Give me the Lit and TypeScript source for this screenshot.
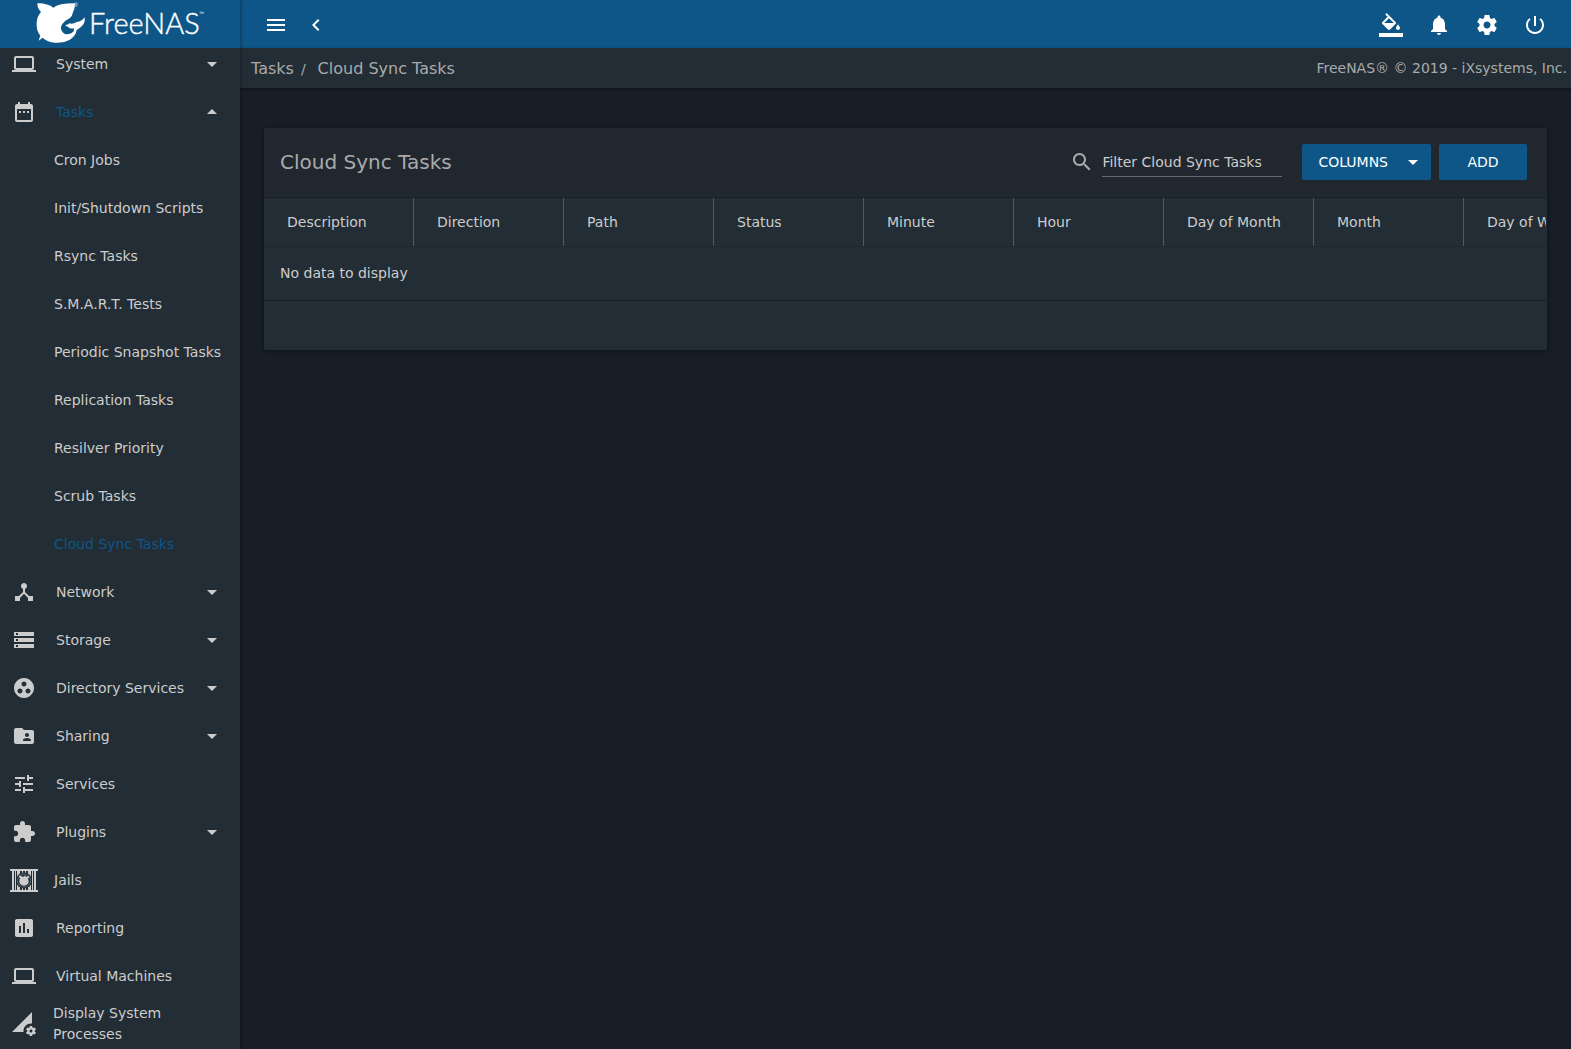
import { LitElement, html, css, svg, nothing } from "lit";
import { customElement, property } from "lit/decorators.js";

const ICONS: Record<string, string> = {
  laptop: "M20 18c1.1 0 1.99-.9 1.99-2L22 6c0-1.1-.9-2-2-2H4c-1.1 0-2 .9-2 2v10c0 1.1.9 2 2 2H0v2h24v-2h-4zM4 6h16v10H4V6z",
  calendar: "M9 11H7v2h2v-2zm4 0h-2v2h2v-2zm4 0h-2v2h2v-2zm2-7h-1V2h-2v2H8V2H6v2H5c-1.11 0-1.99.9-1.99 2L3 20c0 1.1.89 2 2 2h14c1.1 0 2-.9 2-2V6c0-1.1-.9-2-2-2zm0 16H5V9h14v11z",
  hub: "M17 16l-4-4V8.82C14.16 8.4 15 7.3 15 6c0-1.66-1.34-3-3-3S9 4.34 9 6c0 1.3.84 2.4 2 2.82V12l-4 4H3v5h5v-3.05l4-4.2 4 4.2V21h5v-5h-4z",
  storage: "M2 20h20v-4H2v4zm2-3h2v2H4v-2zM2 4v4h20V4H2zm4 3H4V5h2v2zm-4 7h20v-4H2v4zm2-3h2v2H4v-2z",
  group: "M12 2C6.48 2 2 6.48 2 12s4.48 10 10 10 10-4.48 10-10S17.52 2 12 2zM8 17.5c-1.38 0-2.5-1.12-2.5-2.5s1.12-2.5 2.5-2.5 2.5 1.12 2.5 2.5-1.12 2.5-2.5 2.5zM9.5 8c0-1.38 1.12-2.5 2.5-2.5s2.5 1.12 2.5 2.5-1.12 2.5-2.5 2.5S9.5 9.38 9.5 8zm6.5 9.5c-1.38 0-2.5-1.12-2.5-2.5s1.12-2.5 2.5-2.5 2.5 1.12 2.5 2.5-1.12 2.5-2.5 2.5z",
  shared: "M20 6h-8l-2-2H4c-1.1 0-1.99.9-1.99 2L2 18c0 1.1.9 2 2 2h16c1.1 0 2-.9 2-2V8c0-1.1-.9-2-2-2zm-5 3c1.1 0 2 .9 2 2s-.9 2-2 2-2-.9-2-2 .9-2 2-2zm4 8h-8v-1c0-1.33 2.67-2 4-2s4 .67 4 2v1z",
  tune: "M3 17v2h6v-2H3zM3 5v2h10V5H3zm10 16v-2h8v-2h-8v-2h-2v6h2zM7 9v2H3v2h4v2h2V9H7zm14 4v-2H11v2h10zm-6-4h2V7h4V5h-4V3h-2v6z",
  extension: "M20.5 11H19V7c0-1.1-.9-2-2-2h-4V3.5C13 2.12 11.88 1 10.5 1S8 2.12 8 3.5V5H4c-1.1 0-1.99.9-1.99 2v3.8H3.5c1.49 0 2.7 1.21 2.7 2.7s-1.21 2.7-2.7 2.7H2V20c0 1.1.9 2 2 2h3.8v-1.5c0-1.49 1.21-2.7 2.7-2.7 1.49 0 2.7 1.21 2.7 2.7V22H17c1.1 0 2-.9 2-2v-4h1.5c1.38 0 2.5-1.12 2.5-2.5S21.88 11 20.5 11z",
  chart: "M19 3H5c-1.1 0-2 .9-2 2v14c0 1.1.9 2 2 2h14c1.1 0 2-.9 2-2V5c0-1.1-.9-2-2-2zM9 17H7v-7h2v7zm4 0h-2V7h2v10zm4 0h-2v-4h2v4z",
  processes: "M18.99 11.5c.34 0 .67.03 1 .07L20 0 0 20h11.56c-.04-.33-.07-.66-.07-1 0-4.14 3.36-7.5 7.5-7.5zm3.71 7.99c.02-.16.04-.32.04-.49 0-.17-.01-.33-.04-.49l1.06-.83c.09-.08.12-.21.06-.32l-1-1.73c-.06-.11-.19-.15-.31-.11l-1.24.5c-.26-.2-.54-.37-.85-.49l-.19-1.32c-.01-.12-.12-.21-.24-.21h-2c-.12 0-.23.09-.25.21l-.19 1.32c-.3.13-.59.29-.85.49l-1.24-.5c-.11-.04-.24 0-.31.11l-1 1.73c-.06.11-.04.24.06.32l1.06.83c-.02.16-.03.32-.03.49 0 .17.01.33.03.49l-1.06.83c-.09.08-.12.21-.06.32l1 1.73c.06.11.19.15.31.11l1.24-.5c.26.2.54.37.85.49l.19 1.32c.02.12.12.21.25.21h2c.12 0 .23-.09.25-.21l.19-1.32c.3-.13.59-.29.84-.49l1.25.5c.11.04.24 0 .31-.11l1-1.73c.06-.11.03-.24-.06-.32l-1.07-.83zm-3.71 1.01c-.83 0-1.5-.67-1.5-1.5s.67-1.5 1.5-1.5 1.5.67 1.5 1.5-.67 1.5-1.5 1.5z",
  fill: "M16.56 8.94L7.62 0 6.21 1.41l2.38 2.38-5.15 5.15c-.59.59-.59 1.54 0 2.12l5.5 5.5c.29.29.68.44 1.06.44s.77-.15 1.06-.44l5.5-5.5c.59-.58.59-1.53 0-2.12zM5.21 10L10 5.21 14.79 10H5.21zM19 11.5s-2 2.17-2 3.5c0 1.1.9 2 2 2s2-.9 2-2c0-1.33-2-3.5-2-3.5zM0 20h24v4H0v-4z",
  bell: "M12 22c1.1 0 2-.9 2-2h-4c0 1.1.89 2 2 2zm6-6v-5c0-3.07-1.64-5.64-4.5-6.32V4c0-.83-.67-1.5-1.5-1.5s-1.5.67-1.5 1.5v.68C7.63 5.36 6 7.92 6 11v5l-2 2v1h16v-1l-2-2z",
  settings: "M19.43 12.98c.04-.32.07-.64.07-.98s-.03-.66-.07-.98l2.11-1.65c.19-.15.24-.42.12-.64l-2-3.46c-.12-.22-.39-.3-.61-.22l-2.49 1c-.52-.4-1.08-.73-1.69-.98l-.38-2.65C14.46 2.18 14.25 2 14 2h-4c-.25 0-.46.18-.49.42l-.38 2.65c-.61.25-1.17.59-1.69.98l-2.49-1c-.23-.09-.49 0-.61.22l-2 3.46c-.13.22-.07.49.12.64l2.11 1.65c-.04.32-.07.65-.07.98s.03.66.07.98l-2.11 1.65c-.19.15-.24.42-.12.64l2 3.46c.12.22.39.3.61.22l2.49-1c.52.4 1.08.73 1.69.98l.38 2.65c.03.24.24.42.49.42h4c.25 0 .46-.18.49-.42l.38-2.65c.61-.25 1.17-.59 1.69-.98l2.49 1c.23.09.49 0 .61-.22l2-3.46c.12-.22.07-.49-.12-.64l-2.11-1.65zM12 15.5c-1.93 0-3.5-1.57-3.5-3.5s1.57-3.5 3.5-3.5 3.5 1.57 3.5 3.5-1.57 3.5-3.5 3.5z",
  power: "M13 3h-2v10h2V3zm4.83 2.17l-1.42 1.42C17.99 7.86 19 9.81 19 12c0 3.87-3.13 7-7 7s-7-3.13-7-7c0-2.19 1.01-4.14 2.58-5.42L6.17 5.17C4.23 6.82 3 9.26 3 12c0 4.97 4.03 9 9 9s9-4.03 9-9c0-2.74-1.23-5.18-3.17-6.83z",
  menu: "M3 18h18v-2H3v2zm0-5h18v-2H3v2zm0-7v2h18V6H3z",
  back: "M15.41 7.41L14 6l-6 6 6 6 1.41-1.41L10.83 12z",
  search: "M15.5 14h-.79l-.28-.27C15.41 12.59 16 11.11 16 9.5 16 5.91 13.09 3 9.5 3S3 5.91 3 9.5 5.91 16 9.5 16c1.61 0 3.09-.59 4.23-1.57l.27.28v.79l5 4.99L20.49 19l-4.99-5zm-6 0C7.01 14 5 11.99 5 9.5S7.01 5 9.5 5 14 7.01 14 9.5 11.99 14 9.5 14z",
  down: "M7 10l5 5 5-5z",
  up: "M7 14l5-5 5 5z",
};

const icon = (name: string) =>
  html`<svg class="icon" viewBox="0 0 24 24" aria-hidden="true">${svg`<path d=${ICONS[name]}></path>`}</svg>`;

const jailIcon = html`<svg class="jail" viewBox="0 0 28 24" aria-hidden="true">
  <path d="M0 1h28v2H0zM0 22h28v2H0zM2 3h2v19H2zM5 3h1v19H5zM7 3h3v19H7zM12 3h1v19h-1zM15 3h1v19h-1zM18 3h3v19h-3zM22 3h1v19h-1zM24 3h2v19h-2z"></path>
  <circle class="hole" cx="14" cy="12.5" r="8"></circle>
  <circle class="ring" cx="14" cy="12.5" r="6.5"></circle>
  <path d="M9 7.500q2.600.2 4 1.600 1.200-1.200 2.600-1.600l.2 1.400q1.600-1 3.400-1.200-.1 2-1.200 3.200 1 1.600.6 3.400-1 3.200-4.600 3.400-4.200-.2-4.700-4.200-.1-1.700.7-2.900-1-1.300-1-3.100z"></path>
</svg>`;

interface NavEntry {
  label: string;
  icon: string;
  expandable?: boolean;
  children?: string[];
}

const NAV: NavEntry[] = [
  { label: "System", icon: "laptop", expandable: true },
  {
    label: "Tasks",
    icon: "calendar",
    expandable: true,
    children: [
      "Cron Jobs",
      "Init/Shutdown Scripts",
      "Rsync Tasks",
      "S.M.A.R.T. Tests",
      "Periodic Snapshot Tasks",
      "Replication Tasks",
      "Resilver Priority",
      "Scrub Tasks",
      "Cloud Sync Tasks",
    ],
  },
  { label: "Network", icon: "hub", expandable: true },
  { label: "Storage", icon: "storage", expandable: true },
  { label: "Directory Services", icon: "group", expandable: true },
  { label: "Sharing", icon: "shared", expandable: true },
  { label: "Services", icon: "tune" },
  { label: "Plugins", icon: "extension", expandable: true },
  { label: "Jails", icon: "jail" },
  { label: "Reporting", icon: "chart" },
  { label: "Virtual Machines", icon: "laptop" },
  { label: "Display System Processes", icon: "processes" },
];

const COLUMNS = ["Description", "Direction", "Path", "Status", "Minute", "Hour", "Day of Month", "Month", "Day of Week"];

const shared = css`
  * {
    box-sizing: border-box;
  }
  button {
    font: inherit;
    color: inherit;
    background: none;
    border: 0;
    margin: 0;
    padding: 0;
    cursor: pointer;
  }
  a {
    color: inherit;
    text-decoration: none;
  }
  .icon {
    display: block;
    flex: none;
    width: 24px;
    height: 24px;
    fill: currentColor;
  }
`;

@customElement("nas-sidebar")
export class NasSidebar extends LitElement {
  @property() active = "Cloud Sync Tasks";

  static styles = [
    shared,
    css`
      :host {
        display: flex;
        flex-direction: column;
        width: 240px;
        flex: none;
        background: #232d35;
        color: #cccccc;
        box-shadow: 1px 0 3px rgba(0, 0, 0, 0.3);
        z-index: 1;
      }
      .brand {
        display: flex;
        flex: none;
        height: 48px;
        padding-left: 35px;
        background: #0d5687;
        position: relative;
        z-index: 1;
      }
      .logo {
        display: block;
        width: 180px;
        height: 48px;
        fill: #fff;
      }
      .word {
        font: 300 29px "Lato", "Liberation Sans", sans-serif;
        stroke: #fff;
        stroke-width: 0.4;
      }
      .mark {
        font: 5px "Liberation Sans", sans-serif;
      }
      .scroll {
        flex: 1;
        min-height: 0;
        overflow: hidden;
      }
      ul {
        list-style: none;
        margin: 0;
        padding: 0;
      }
      /* the list rests slightly scrolled under the brand bar */
      .top {
        margin-top: -8px;
      }
      .row {
        display: flex;
        align-items: center;
        width: 100%;
        height: 48px;
        padding: 0 16px 0 12px;
        gap: 20px;
        text-align: left;
        line-height: 21px;
        white-space: nowrap;
      }
      .label {
        flex: 1;
        min-width: 0;
      }
      .jails {
        padding-left: 10px;
        gap: 16px;
      }
      .processes {
        padding-right: 60px;
        gap: 17px;
        white-space: normal;
      }
      .child {
        padding-left: 54px;
      }
      .on {
        color: #0d5687;
      }
      .jail {
        flex: none;
        width: 28px;
        height: 24px;
        fill: #cccccc;
      }
      .hole {
        fill: #232d35;
      }
      .ring {
        fill: none;
        stroke: #5d666d;
        stroke-width: 1;
      }
      .pic {
        display: flex;
        color: #cccccc;
      }
    `,
  ];

  private entry(e: NavEntry) {
    const open = !!e.children;
    const variant = e.icon === "jail" ? "jails" : e.icon === "processes" ? "processes" : "";
    const body = html`<span class="pic">${e.icon === "jail" ? jailIcon : icon(e.icon)}</span>
      <span class="label ${open ? "on" : ""}">${e.label}</span>
      ${e.expandable ? icon(open ? "up" : "down") : nothing}`;
    return html`<li>
      ${e.expandable
        ? html`<button class="row" aria-expanded=${open ? "true" : "false"}>${body}</button>`
        : html`<a class="row ${variant}" href="#">${body}</a>`}
      ${open
        ? html`<ul>
            ${e.children!.map(
              (c) => html`<li><a class="row child ${c === this.active ? "on" : ""}" href="#">${c}</a></li>`
            )}
          </ul>`
        : nothing}
    </li>`;
  }

  render() {
    return html`
      <a class="brand" href="#" aria-label="FreeNAS">
        <svg class="logo" viewBox="0 0 180 48">
          <g transform="translate(-5 0) scale(.3333)">
            <path
              d="M22 10Q34 8 48 13Q62 16 70 23Q84 10 135 10Q136 26 128 40Q127 47 120 54Q104 62 97 72Q90 82 95 92Q101 103 112 103Q124 102 130 95Q133 90 132 85Q120 88 114 80Q108 80 106 74Q114 76 118 70Q128 74 140 66Q156 64 164 52Q166 66 158 76Q150 85 140 90Q138 108 118 120Q100 130 75 128Q52 126 38 113Q32 118 26 122Q28 114 31 107Q18 92 20 66Q22 48 33 36Q22 26 22 10Z"
            ></path>
          </g>
          <text class="word" x="54" y="34">FreeNAS</text>
          <text class="mark" x="39" y="7">®</text>
          <text class="mark" x="164" y="15">™</text>
        </svg>
      </a>
      <nav class="scroll" aria-label="Main">
        <ul class="top">
          ${NAV.map((e) => this.entry(e))}
        </ul>
      </nav>
    `;
  }
}

@customElement("nas-topbar")
export class NasTopbar extends LitElement {
  static styles = [
    shared,
    css`
      :host {
        display: flex;
        align-items: center;
        flex: none;
        height: 48px;
        padding: 2px 16px 0 16px;
        background: #0d5687;
        color: #fff;
      }
      .btn {
        display: grid;
        place-items: center;
        width: 40px;
        height: 40px;
      }
      .right {
        display: flex;
        gap: 8px;
        margin-left: auto;
      }
    `,
  ];
  render() {
    return html`
      <button class="btn" aria-label="Toggle menu">${icon("menu")}</button>
      <button class="btn" aria-label="Collapse">${icon("back")}</button>
      <div class="right">
        <button class="btn" aria-label="Theme">${icon("fill")}</button>
        <button class="btn" aria-label="Alerts">${icon("bell")}</button>
        <button class="btn" aria-label="Settings">${icon("settings")}</button>
        <button class="btn" aria-label="Power">${icon("power")}</button>
      </div>
    `;
  }
}

@customElement("nas-task-table")
export class NasTaskTable extends LitElement {
  static styles = [
    shared,
    css`
      :host {
        display: block;
        margin: 40px 24px 0;
        border-radius: 2px;
        background: #232d35;
        color: #cccccc;
        box-shadow: 0 1px 4px rgba(0, 0, 0, 0.45);
      }
      .head {
        display: flex;
        align-items: center;
        height: 69px;
        padding: 0 20px 1px 16px;
        background: #20272f;
        border-radius: 2px 2px 0 0;
      }
      h1 {
        margin: 0;
        flex: 1;
        font-size: 20px;
        font-weight: 400;
        line-height: 28px;
        color: #aaaaaa;
      }
      .find {
        display: flex;
        align-items: center;
        gap: 8px;
        margin-right: 20px;
        color: #aaaaaa;
      }
      input {
        width: 180px;
        height: 30px;
        padding: 0;
        border: 0;
        border-bottom: 1px solid #636a70;
        border-radius: 0;
        outline: 0;
        background: none;
        font: inherit;
        color: #cccccc;
      }
      input::placeholder {
        color: #cccccc;
        opacity: 1;
      }
      .btn {
        display: flex;
        align-items: center;
        justify-content: center;
        height: 36px;
        border-radius: 2px;
        background: #0d5687;
        color: #fff;
      }
      .cols {
        padding: 0 6px 0 16px;
        gap: 13px;
        margin-right: 8px;
      }
      .add {
        width: 88px;
      }
      .clip {
        overflow: hidden;
        margin-right: 1px;
        border-top: 1px solid #171e26;
      }
      table {
        table-layout: fixed;
        width: 1350px;
        border-collapse: separate;
        border-spacing: 0;
      }
      th,
      td {
        text-align: left;
        font-weight: 400;
        line-height: 20px;
      }
      th {
        width: 150px;
        height: 48px;
        padding: 0 0 0 23px;
        border-right: 1px solid #525a61;
        white-space: nowrap;
      }
      td {
        height: 55px;
        padding: 0 16px 2px;
        border-top: 1px solid #20272f;
        border-bottom: 1px solid #171e26;
      }
      .foot {
        height: 49px;
      }
    `,
  ];
  render() {
    return html`
      <div class="head">
        <h1>Cloud Sync Tasks</h1>
        <label class="find">
          ${icon("search")}
          <input type="text" placeholder="Filter Cloud Sync Tasks" aria-label="Filter Cloud Sync Tasks" />
        </label>
        <button class="btn cols">COLUMNS ${icon("down")}</button>
        <button class="btn add">ADD</button>
      </div>
      <div class="clip">
        <table>
          <thead>
            <tr>
              ${COLUMNS.map((c) => html`<th scope="col">${c}</th>`)}
            </tr>
          </thead>
          <tbody>
            <tr>
              <td colspan=${COLUMNS.length}>No data to display</td>
            </tr>
          </tbody>
        </table>
      </div>
      <div class="foot"></div>
    `;
  }
}

@customElement("app-root")
export class AppRoot extends LitElement {
  static styles = [
    shared,
    css`
      :host {
        display: flex;
        height: 100vh;
        overflow: hidden;
        background: #171e26;
        font-family: "DejaVu Sans", sans-serif;
        font-size: 14px;
      }
      main {
        flex: 1;
        min-width: 0;
        display: flex;
        flex-direction: column;
      }
      .crumbs {
        display: flex;
        align-items: center;
        flex: none;
        height: 40px;
        padding: 0 4px 0 11px;
        background: #232d35;
        color: #aaaaaa;
        box-shadow: 0 1px 3px rgba(0, 0, 0, 0.4);
      }
      .trail {
        display: flex;
        align-items: baseline;
        flex: 1;
        font-size: 16px;
      }
      .sep {
        padding: 0 12px 0 7px;
        font-size: 14px;
      }
    `,
  ];
  render() {
    return html`
      <nas-sidebar></nas-sidebar>
      <main>
        <nas-topbar></nas-topbar>
        <div class="crumbs">
          <nav class="trail" aria-label="Breadcrumb">
            <a href="#">Tasks</a><span class="sep">/</span><a href="#">Cloud Sync Tasks</a>
          </nav>
          <span>FreeNAS® © 2019 - iXsystems, Inc.</span>
        </div>
        <nas-task-table></nas-task-table>
      </main>
    `;
  }
}
